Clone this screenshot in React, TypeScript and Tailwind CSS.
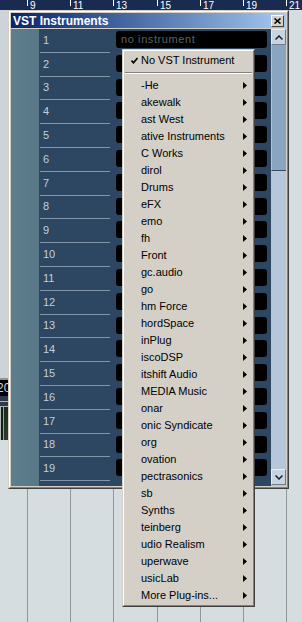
import React from "react";

const menuItems = [
  "-He", "akewalk", "ast West", "ative Instruments", "C Works", "dirol", "Drums", "eFX", "emo", "fh",
  "Front", "gc.audio", "go", "hm Force", "hordSpace", "inPlug", "iscoDSP", "itshift Audio", "MEDIA Music",
  "onar", "onic Syndicate", "org", "ovation", "pectrasonics", "sb", "Synths", "teinberg", "udio Realism",
  "uperwave", "usicLab", "More Plug-ins...",
];

const rulerLabels = ["9", "11", "13", "15", "17", "19", "21"];
const colWidths = [43, 43, 44, 43, 43, 43, 16];

function Row({ n }: { n: number }) {
  return (
    <div className="flex h-[23.8px] shrink-0">
      <div className="flex w-[77px] flex-col">
        <div className="flex flex-1 items-center pl-[4px] text-[11px] leading-none text-[#c4cedb]">{n}</div>
        <div className="ml-[1px] h-px w-[70px] bg-[#8294a8]" />
      </div>
      <div className="mt-[2px] flex h-[17px] w-[151px] items-center rounded-[3px] bg-black pl-[5px]">
        {n === 1 && (
          <span className="text-[11px] leading-none tracking-[0.6px] text-[#5c6064]">no instrument</span>
        )}
      </div>
    </div>
  );
}

function Arrow() {
  return (
    <svg width="4" height="7" viewBox="0 0 4 7" className="shrink-0">
      <polygon points="0,0 4,3.5 0,7" fill="#000" />
    </svg>
  );
}

export default function App() {
  const rows = Array.from({ length: 19 }, (_, i) => i + 1);
  return (
    <div className="relative h-[622px] w-[302px] overflow-hidden bg-[#d6dde1] font-['Liberation_Sans',Arial,sans-serif]">
      {/* ruler */}
      <div className="flex h-[10px] overflow-hidden bg-[#1a2b52]">
        <div className="w-[27px] shrink-0" />
        {rulerLabels.map((l, i) => (
          <div key={l} className="flex shrink-0" style={{ width: colWidths[i] }}>
            <div className="h-[6px] w-px bg-white" />
            <span className="ml-[2px] mt-[1px] text-[10px] leading-none text-white">{l}</span>
          </div>
        ))}
      </div>
      {/* arrange grid */}
      <div className="flex h-[612px]">
        <div className="flex w-[27px] shrink-0 flex-col">
          <div className="h-[368px] bg-[#ccd3d9]" />
          <div className="h-[2px] bg-[#8c949c]" />
          <div className="flex h-[16px] items-center overflow-hidden bg-black">
            <span className="ml-[-3px] text-[12px] leading-none text-[#c8d6e4]">20</span>
          </div>
          <div className="h-[5px] bg-[#2c3a4a]" />
          <div className="h-px bg-[#aeb6be]" />
          <div className="h-[4px] bg-[#2c3a4a]" />
          <div className="flex h-[34px] border-l border-t border-[#b0b8b8] bg-[#2c3a4a]">
            <div className="w-[2px] bg-[#14200f]" />
            <div className="w-px bg-[#9aa4a4]" />
            <div className="flex-1 bg-gradient-to-b from-[#1a2a1a] to-[#2a3e2a]" />
          </div>
          <div className="flex-1" />
        </div>
        {colWidths.map((w, i) => (
          <div key={i} className="shrink-0 border-l border-[#8e979c]" style={{ width: w }} />
        ))}
      </div>

      {/* VST Instruments window */}
      <div className="absolute left-[8px] top-[10px] h-[479px] w-[281px] border border-b-[#404040] border-l-[#d4d0c8] border-r-[#404040] border-t-[#d4d0c8]">
        <div className="flex h-full w-full flex-col border border-b-[#808080] border-l-white border-r-[#808080] border-t-white bg-[#d4d0c8] p-px">
          <div className="flex h-[15px] shrink-0 items-center justify-between bg-gradient-to-r from-[#0a246a] to-[#a6caf0] pl-[2px] pr-[2px]">
            <span className="text-[12px] font-bold leading-none text-white">VST Instruments</span>
            <div className="flex h-[12px] w-[13px] items-center justify-center border border-b-[#404040] border-l-white border-r-[#404040] border-t-white bg-[#d4d0c8]">
              <svg width="7" height="6" viewBox="0 0 7 6">
                <path d="M0.5 0.5 L6.5 5.5 M6.5 0.5 L0.5 5.5" stroke="#000" strokeWidth="1.6" />
              </svg>
            </div>
          </div>
          <div className="mt-px flex h-[457px] shrink-0">
            <div className="w-[28px] shrink-0 bg-gradient-to-r from-[#5e7e8e] to-[#587888]" />
            <div className="flex w-[232px] shrink-0 flex-col overflow-hidden bg-[#2d4661]">
              {rows.map((n) => (
                <Row key={n} n={n} />
              ))}
              <div className="flex-1" />
            </div>
            <div className="flex w-[15px] shrink-0 flex-col bg-[#b6c7d9]">
              <div className="flex h-[16px] shrink-0 items-center justify-center border border-b-[#6c7c8c] border-l-[#e6eef6] border-r-[#6c7c8c] border-t-[#e6eef6] bg-[#c8d4e0]">
                <svg width="8" height="5" viewBox="0 0 8 5">
                  <polyline points="0.5,4.5 4,1 7.5,4.5" fill="none" stroke="#1a2230" strokeWidth="1.5" />
                </svg>
              </div>
              <div className="h-[126px] shrink-0 border-b border-l border-b-[#3c4c60] border-l-[#b0c4d8] bg-[#8aa5c0]" />
              <div className="flex-1" />
              <div className="mb-px flex h-[16px] shrink-0 items-center justify-center border border-b-[#6c7c8c] border-l-[#e6eef6] border-r-[#6c7c8c] border-t-[#e6eef6] bg-[#c8d4e0]">
                <svg width="8" height="5" viewBox="0 0 8 5">
                  <polyline points="0.5,0.5 4,4 7.5,0.5" fill="none" stroke="#1a2230" strokeWidth="1.5" />
                </svg>
              </div>
            </div>
          </div>
        </div>
      </div>

      {/* popup menu */}
      <div className="absolute left-[122px] top-[49px] w-[133px] border border-b-[#404040] border-l-[#d4d0c8] border-r-[#404040] border-t-[#d4d0c8]">
        <div className="flex flex-col border border-b-[#808080] border-l-white border-r-[#808080] border-t-white bg-[#d4d0c8] p-px text-[11px] leading-none text-black">
          <div className="flex h-[17px] items-center">
            <div className="flex w-[16px] justify-center pl-[2px]">
              <svg width="7" height="7" viewBox="0 0 7 7">
                <polyline points="0.5,3.5 2.5,5.8 6.5,1" fill="none" stroke="#000" strokeWidth="1.6" />
              </svg>
            </div>
            <span>No VST Instrument</span>
          </div>
          <div className="flex h-[8px] flex-col pt-[3px]">
            <div className="h-px bg-[#808080]" />
            <div className="h-px bg-white" />
          </div>
          {menuItems.map((m) => (
            <div key={m} className="flex h-[17px] items-center justify-between pl-[16px] pr-[5px]">
              <span>{m}</span>
              <Arrow />
            </div>
          ))}
        </div>
      </div>
    </div>
  );
}
